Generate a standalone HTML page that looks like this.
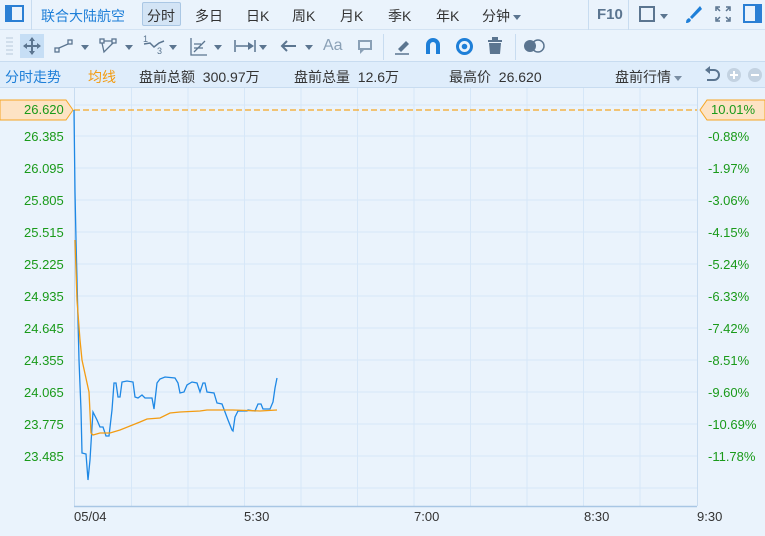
<!DOCTYPE html>
<html><head><meta charset="utf-8"><style>
*{margin:0;padding:0;box-sizing:border-box}
body{width:765px;height:536px;background:#eaf3fc;font-family:"Liberation Sans","Noto Sans CJK SC",sans-serif;position:relative;overflow:hidden;color:#333}
.a{position:absolute;white-space:nowrap}
.r1{top:0;left:0;width:765px;height:30px;background:#eaf3fc;border-bottom:1px solid #d3e3f3}
.r2{top:30px;left:0;width:765px;height:32px;background:#eaf3fc;border-bottom:1px solid #c8dcf0}
.r3{top:62px;left:0;width:765px;height:26px;background:#dfedfb;border-bottom:1px solid #c8dcf0}
.t{font-size:14px;top:6px}
.s{font-size:14px;top:67px}
.g{font-size:13px;color:#1a9a1a;font-family:"Liberation Sans",sans-serif}
.sep{position:absolute;width:1px;background:#c8dcf0}
.tri{display:inline-block;width:0;height:0;border-left:4px solid transparent;border-right:4px solid transparent;border-top:5px solid #5b7590;vertical-align:middle;margin-left:3px}
</style></head><body>
<div class="a r1"></div><div class="a r2"></div><div class="a r3"></div>
<div class="a" style="left:5px;top:5px;width:19px;height:17px;border:2px solid #2a7fd4"><div style="width:5px;height:13px;background:#2a7fd4"></div></div>
<div class="sep" style="left:31px;top:0;height:30px"></div>
<div class="a t" style="left:41px;color:#1e7fd8">联合大陆航空</div>
<div class="a" style="left:142px;top:2px;width:39px;height:24px;background:#d3e4f5;border:1px solid #aac7e4;border-radius:2px"></div>
<div class="a t" style="left:147px">分时</div>
<div class="a t" style="left:195px">多日</div>
<div class="a t" style="left:246px">日K</div>
<div class="a t" style="left:292px">周K</div>
<div class="a t" style="left:340px">月K</div>
<div class="a t" style="left:388px">季K</div>
<div class="a t" style="left:436px">年K</div>
<div class="a t" style="left:482px">分钟<span class="tri"></span></div>
<div class="sep" style="left:588px;top:0;height:30px"></div>
<div class="a" style="left:597px;top:6px;font-size:15px;font-weight:bold;color:#5b7590">F10</div>
<div class="sep" style="left:628px;top:0;height:30px"></div>
<div class="a" style="left:639px;top:6px;width:16px;height:16px;border:2px solid #5b7590"></div>
<div class="a" style="left:657px;top:8px"><span class="tri"></span></div>
<svg class="a" style="left:683px;top:4px" width="20" height="20"><path d="M17 2 L7 13 L9 15 L19 5 Z M6 14 Q3 15 3 19 Q7 19 8 16 Z" fill="#1e7fd8"/></svg>
<svg class="a" style="left:714px;top:5px" width="18" height="18" stroke="#5b7590" fill="none" stroke-width="1.5"><path d="M2 6V2H6M12 2H16V6M16 12V16H12M6 16H2V12M3 3L6 6M15 3L12 6M15 15L12 12M3 15L6 12"/></svg>
<div class="a" style="left:743px;top:4px;width:19px;height:19px;border:2px solid #2a7fd4"><div style="position:absolute;right:0;top:0;width:5px;height:15px;background:#2a7fd4"></div></div>
<svg class="a" style="left:6px;top:37px" width="8" height="20" stroke="#b8c9da"><path d="M0 1H7M0 5H7M0 9H7M0 13H7M0 17H7"/></svg>
<div class="a" style="left:20px;top:34px;width:24px;height:24px;background:#c6def5"></div>
<svg class="a" style="left:22px;top:36px" width="20" height="20" stroke="#5b7590" stroke-width="2" fill="#5b7590"><path d="M10 2V18M2 10H18" fill="none"/><path d="M10 1L7 5H13ZM10 19L7 15H13ZM1 10L5 7V13ZM19 10L15 7V13Z" stroke="none"/></svg>
<svg class="a" style="left:54px;top:38px" width="20" height="16" stroke="#5b7590" fill="none" stroke-width="1.3"><rect x="1" y="10" width="4" height="4"/><rect x="14" y="2" width="4" height="4"/><path d="M5 10L14 6"/></svg>
<div class="a" style="left:78px;top:39px"><span class="tri"></span></div>
<svg class="a" style="left:99px;top:37px" width="20" height="18" stroke="#5b7590" fill="none" stroke-width="1.3"><rect x="1" y="2" width="4" height="4"/><rect x="13" y="2" width="4" height="4"/><path d="M5 4H13M3 6L5 15L14 6"/></svg>
<div class="a" style="left:122px;top:39px"><span class="tri"></span></div>
<div class="a" style="left:143px;top:34px;font-size:9px;color:#5b7590">1</div>
<svg class="a" style="left:143px;top:40px" width="22" height="14" stroke="#5b7590" fill="none" stroke-width="1.5"><path d="M1 4L7 3L11 7L16 3L21 1"/></svg>
<div class="a" style="left:157px;top:46px;font-size:9px;color:#5b7590">3</div>
<div class="a" style="left:166px;top:39px"><span class="tri"></span></div>
<svg class="a" style="left:189px;top:37px" width="20" height="20" stroke="#5b7590" fill="none" stroke-width="1.3"><path d="M2 1V18H18M5 15L16 4M5 11H14M5 7H12"/></svg>
<div class="a" style="left:211px;top:39px"><span class="tri"></span></div>
<svg class="a" style="left:234px;top:38px" width="22" height="16" stroke="#5b7590" fill="#5b7590" stroke-width="1.5"><path d="M1 2V14M21 2V14M2 8H15" fill="none"/><path d="M20 8L14 4V12Z" stroke="none"/></svg>
<div class="a" style="left:256px;top:39px"><span class="tri"></span></div>
<svg class="a" style="left:279px;top:38px" width="18" height="16" stroke="#5b7590" fill="none" stroke-width="2"><path d="M17 8H3M8 3L3 8L8 13"/></svg>
<div class="a" style="left:302px;top:39px"><span class="tri"></span></div>
<div class="a" style="left:323px;top:37px;font-size:16px;color:#8aa0b6">Aa</div>
<svg class="a" style="left:356px;top:38px" width="18" height="18"><path d="M2 2H16V12H8L4 16V12H2Z" fill="#8aa0b6"/><path d="M4 4H14V10H4Z" fill="#eaf3fc"/></svg>
<div class="sep" style="left:383px;top:34px;height:26px"></div>
<svg class="a" style="left:394px;top:38px" width="18" height="18"><path d="M4 11L12 3L15 6L7 14Z" fill="#5b7590"/><path d="M1 16H15" stroke="#5b7590" stroke-width="1.5"/></svg>
<svg class="a" style="left:424px;top:37px" width="18" height="18"><path d="M2 17V8A7 7 0 0 1 16 8V17H12V8A3 3 0 0 0 6 8V17Z" fill="#1e7fd8"/></svg>
<svg class="a" style="left:455px;top:37px" width="19" height="19"><circle cx="9.5" cy="9.5" r="7" fill="none" stroke="#1e7fd8" stroke-width="3"/><circle cx="9.5" cy="9.5" r="2.8" fill="#1e7fd8"/></svg>
<svg class="a" style="left:487px;top:37px" width="16" height="18" fill="#5b7590"><rect x="1" y="3" width="14" height="2"/><rect x="5" y="0" width="6" height="3"/><path d="M2 6H14L13 17H3Z"/></svg>
<div class="sep" style="left:515px;top:34px;height:26px"></div>
<svg class="a" style="left:523px;top:38px" width="22" height="16"><circle cx="7" cy="8" r="6" fill="#5b7590"/><circle cx="15" cy="8" r="6" fill="none" stroke="#5b7590" stroke-width="1.5"/></svg>
<div class="a s" style="left:5px;color:#1e7fd8">分时走势</div>
<div class="a s" style="left:88px;color:#f39c12">均线</div>
<div class="a s" style="left:139px">盘前总额&nbsp;&nbsp;300.97万</div>
<div class="a s" style="left:294px">盘前总量&nbsp;&nbsp;12.6万</div>
<div class="a s" style="left:449px">最高价&nbsp;&nbsp;26.620</div>
<div class="a s" style="left:615px">盘前行情<span class="tri" style="border-top-color:#7a8ea3"></span></div>
<svg class="a" style="left:702px;top:66px" width="62" height="18"><path d="M6 4H12A5 5 0 0 1 12 14H5" fill="none" stroke="#5b7590" stroke-width="2"/><path d="M3 4L8 0V8Z" fill="#5b7590"/><circle cx="32" cy="9" r="7" fill="#c3d2e1"/><path d="M28 9H36M32 5V13" stroke="#fff" stroke-width="2"/><circle cx="53" cy="9" r="7" fill="#c3d2e1"/><path d="M49 9H57" stroke="#fff" stroke-width="2"/></svg>
<svg class="a" style="left:0;top:88px" width="765" height="448">
<g stroke="#d6e7f8" stroke-width="1">
<path d="M131.5 0V418M188 0V418M244.5 0V418M301 0V418M357.5 0V418M414 0V418M470.5 0V418M527 0V418M583.5 0V418M640 0V418"/>
<path d="M74 17H697M74 48H697M74 80H697M74 112H697M74 144H697M74 176H697M74 208H697M74 240H697M74 272H697M74 304H697M74 336H697M74 368H697M74 400H697"/>
</g>
<path d="M74.5 0V418M697.5 0V418" stroke="#c8dcf0"/>
<path d="M74 418.5H697" stroke="#a8c6e4" stroke-width="1.5"/>
<path d="M74 22H697" stroke="#f5a623" stroke-dasharray="6,3" stroke-width="1.2"/>
<path d="M0 12H66L73 22L66 32H0Z" fill="#fde3c4" stroke="#f5a623"/>
<path d="M765 12H707L700 22L707 32H765Z" fill="#fde3c4" stroke="#f5a623"/>
<g transform="translate(0,-88)">
<polyline fill="none" stroke="#1e88e5" stroke-width="1.3" points="74,110 75,192 76,240 79,360 81,410 82,453 86,454 88,480 90,460 92,427 93,412 97,420 100,427 103,427 106,436 109,436 112,410 114,383 116,383 118,397 120,397 122,382 127,381 133,382 135,397 138,398 142,395 145,398 152,398 154,409 157,383 160,379 165,377 175,378 178,383 180,393 184,392 187,385 192,382 197,383 200,392 203,383 205,383 207,392 214,393 217,403 222,404 225,412 228,420 232,430 233,431 235,417 238,411 247,411 248,410 255,411 258,404 261,404 263,409 270,409 273,402 275,388 277,378"/>
<polyline fill="none" stroke="#f39c12" stroke-width="1.3" points="75,240 77,300 80,340 82,360 89,392 91,433 93,435 100,433 110,433 120,430 130,426 140,422 147,419 160,418 170,413 180,412 200,411 207,410 233,410 260,411 277,410"/>
</g>
</svg>
<div class="a g" style="left:24px;top:102px">26.620</div>
<div class="a g" style="left:24px;top:129px">26.385</div>
<div class="a g" style="left:24px;top:161px">26.095</div>
<div class="a g" style="left:24px;top:193px">25.805</div>
<div class="a g" style="left:24px;top:225px">25.515</div>
<div class="a g" style="left:24px;top:257px">25.225</div>
<div class="a g" style="left:24px;top:289px">24.935</div>
<div class="a g" style="left:24px;top:321px">24.645</div>
<div class="a g" style="left:24px;top:353px">24.355</div>
<div class="a g" style="left:24px;top:385px">24.065</div>
<div class="a g" style="left:24px;top:417px">23.775</div>
<div class="a g" style="left:24px;top:449px">23.485</div>
<div class="a g" style="left:711px;top:102px">10.01%</div>
<div class="a g" style="left:708px;top:129px">-0.88%</div>
<div class="a g" style="left:708px;top:161px">-1.97%</div>
<div class="a g" style="left:708px;top:193px">-3.06%</div>
<div class="a g" style="left:708px;top:225px">-4.15%</div>
<div class="a g" style="left:708px;top:257px">-5.24%</div>
<div class="a g" style="left:708px;top:289px">-6.33%</div>
<div class="a g" style="left:708px;top:321px">-7.42%</div>
<div class="a g" style="left:708px;top:353px">-8.51%</div>
<div class="a g" style="left:708px;top:385px">-9.60%</div>
<div class="a g" style="left:708px;top:417px">-10.69%</div>
<div class="a g" style="left:708px;top:449px">-11.78%</div>
<div class="a" style="left:74px;top:509px;font-size:13px">05/04</div>
<div class="a" style="left:244px;top:509px;font-size:13px">5:30</div>
<div class="a" style="left:414px;top:509px;font-size:13px">7:00</div>
<div class="a" style="left:584px;top:509px;font-size:13px">8:30</div>
<div class="a" style="left:697px;top:509px;font-size:13px">9:30</div>
</body></html>
